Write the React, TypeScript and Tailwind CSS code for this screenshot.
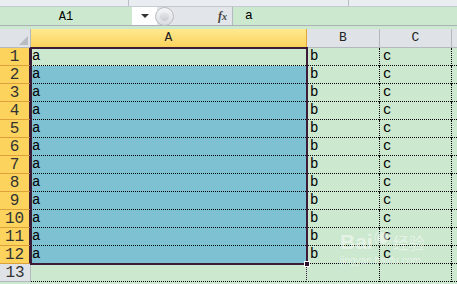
import React from 'react'

const mono = { fontFamily: '"Liberation Mono", "DejaVu Sans Mono", monospace' }

const rows = Array.from({length: 13}, (_, i) => i + 1)

export default function App() {
    return (
        <div className="relative w-[457px] h-[284px] overflow-hidden bg-[#cce8cf]" style={mono}>
            {/* ribbon strip */}
            <div className="flex h-[7px] bg-[#e9ecf0] border-b border-[#c5cad0]">
                <div className="w-[129px] border-r border-[#b9bec5]" />
                <div className="w-[220px] border-r border-[#b9bec5]" />
            </div>

            {/* formula bar */}
            <div className="flex h-[19px] border-b border-[#a9b0b8]">
                <div className="w-[132px] flex items-center justify-center text-[12px] text-black pt-[1px]">A1</div>
                <div className="w-[25px] bg-white flex items-center justify-center">
                    <div className="w-0 h-0 border-l-[4px] border-r-[4px] border-t-[4px] border-l-transparent border-r-transparent border-t-[#333]" />
                </div>
                <div className="w-[76px] bg-[#e2e5e9] flex items-center border-r border-[#b3b9c0]">
                    <div className="w-[19px] h-[19px] rounded-full border border-[#b9bec4] bg-gradient-to-b from-[#f4f5f7] to-[#d9dce0] flex items-center justify-center ml-[-2px]">
                        <div className="w-[9px] h-[9px] rounded-full bg-gradient-to-b from-[#e6e8eb] to-[#c9cdd2]" />
                    </div>
                    <span className="ml-auto mr-[5px] italic font-bold text-[12px] text-[#444]" style={{fontFamily: '"Liberation Serif", serif'}}>f<span className="text-[10px]">x</span></span>
                </div>
                <div className="flex-1 flex items-center pl-[12px] text-[13px] text-black">a</div>
            </div>

            <div className="h-[3px]" />

            {/* column headers */}
            <div className="flex h-[19px] text-[13px] text-[#222]">
                <div className="relative w-[31px] bg-[#dfe3e8] border-r border-b border-[#b4b9bf]">
                    <div className="absolute right-[2px] bottom-[2px] w-0 h-0 border-l-[9px] border-b-[9px] border-l-transparent border-b-[#b8bcc2]" />
                </div>
                <div className="w-[276px] flex items-center justify-center bg-gradient-to-b from-[#fee98f] to-[#fbd35b] border-r border-b border-[#e3a43a]">A</div>
                <div className="w-[73px] flex items-center justify-center bg-[#dfe3e8] border-r border-b border-[#b4b9bf]">B</div>
                <div className="w-[72px] flex items-center justify-center bg-[#dfe3e8] border-r border-b border-[#b4b9bf]">C</div>
                <div className="flex-1 bg-[#dfe3e8] border-b border-[#b4b9bf]" />
            </div>

            {/* body */}
            <div className="relative">
                {rows.map(r => {
                    const sel = r <= 12
                    return (
                        <div key={r} className="flex h-[18px]">
                            <div
                                className={
                                    sel
                                        ? "w-[31px] flex items-center justify-center text-[16px] text-[#333] bg-[#fcd45d] border-r-2 border-r-[#3b1d3a] border-b border-b-[#dea03c]"
                                        : "w-[31px] flex items-center justify-center text-[16px] text-[#333] bg-[#dfe3e8] border-r border-r-[#b4b9bf] border-b border-b-[#b4b9bf]"
                                }
                            >
                                {r}
                            </div>
                            <div
                                className={
                                    (r === 1 ? "bg-[#cce8cf] " : sel ? "bg-[#7ec1d2] " : "bg-[#cce8cf] ") +
                                    "w-[275px] flex items-end pl-[1px] text-[14px] leading-[17px] border-b border-dotted border-black"
                                }
                            >
                                {sel ? 'a' : ''}
                            </div>
                            <div className="w-[73px] flex items-end pl-[3px] text-[14px] leading-[17px] border-l border-dotted border-l-[#3b1d3a] border-b border-b-black">
                                {sel ? 'b' : ''}
                            </div>
                            <div className="w-[72px] flex items-end pl-[3px] text-[14px] leading-[17px] border-l border-b border-dotted border-black">
                                {sel ? 'c' : ''}
                            </div>
                            <div className="flex-1 border-l border-b border-dotted border-black" />
                        </div>
                    )
                })}

                {/* selection outline */}
                <div className="absolute left-[30px] top-[-1px] w-[278px] h-[218px] border-2 border-[#3b1d3a] pointer-events-none" />
                <div className="absolute left-[304px] top-[213px] w-[6px] h-[6px] bg-[#2a1028] border border-white" />

                {/* watermark */}
                <div className="absolute left-[340px] top-[182px] text-white/50 pointer-events-none" style={{fontFamily: '"Liberation Sans", "Noto Sans CJK SC", sans-serif'}}>
                    <div className="flex items-end">
                        <span className="text-[21px] font-bold leading-none">Bai</span>
                        <span className="text-[18px] font-bold leading-none ml-[1px] mb-[4px]">◉</span>
                        <span className="text-[16px] leading-none ml-[1px]">经验</span>
                    </div>
                    <div className="text-[10px] leading-none mt-[4px]">jingyan.baidu.com</div>
                </div>
            </div>
        </div>
    )
}
